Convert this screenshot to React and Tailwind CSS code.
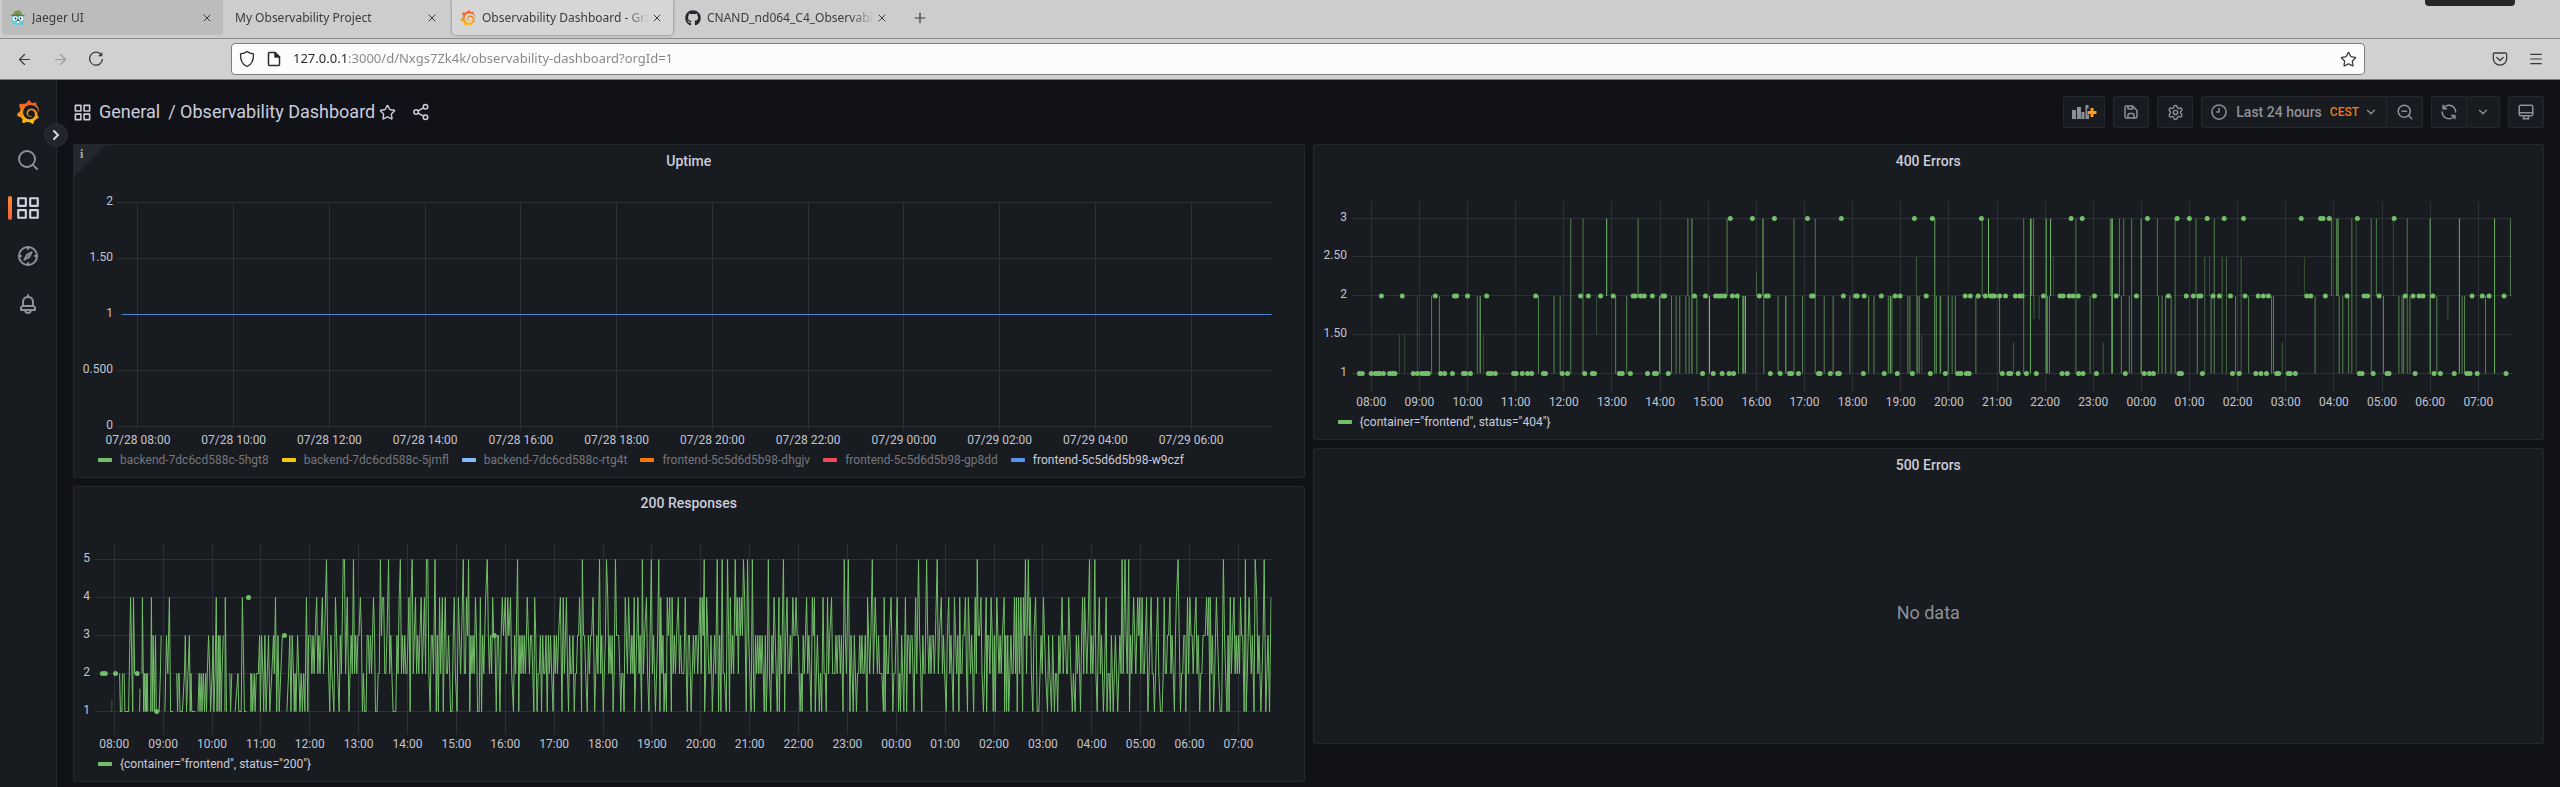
import React from "react";
import { ArrowLeft, ArrowRight, ChevronDown, Menu, Plus, Search, Settings, Star, X, ZoomOut } from "lucide-react";
import { SiGrafana } from "react-icons/si";
import { FaGithub } from "react-icons/fa";

const GREEN = "#73bf69";

/* ---------- icons ---------- */

function AppsIcon({ size }) {
  return (
    <svg width={size} height={size} viewBox="0 0 24 24" fill="none" stroke="currentColor" strokeWidth="2" strokeLinejoin="round">
      <rect x="3" y="3" width="7" height="7" />
      <rect x="14" y="3" width="7" height="7" />
      <rect x="3" y="14" width="7" height="7" />
      <rect x="14" y="14" width="7" height="7" />
    </svg>
  );
}

function CompassIcon() {
  return (
    <svg width="24" height="24" viewBox="0 0 24 24" fill="none" stroke="currentColor" strokeWidth="2" strokeLinecap="round" strokeLinejoin="round">
      <circle cx="12" cy="12" r="9" />
      <path d="M12 3v2M12 19v2M3 12h2M19 12h2" />
      <path d="M15.8 8.2l-5 2.6-2.6 5 5-2.6z" strokeWidth="1.7" />
      <circle cx="12" cy="12" r="0.4" strokeWidth="1" />
    </svg>
  );
}

function BellIcon() {
  return (
    <svg width="24" height="24" viewBox="0 0 24 24" fill="currentColor">
      <path d="M18,13.18V10a6,6,0,0,0-5-5.91V3a1,1,0,0,0-2,0V4.09A6,6,0,0,0,6,10v3.18A3,3,0,0,0,4,16v2a1,1,0,0,0,1,1H8.14a4,4,0,0,0,7.72,0H19a1,1,0,0,0,1-1V16A3,3,0,0,0,18,13.18ZM8,10a4,4,0,0,1,8,0v3H8Zm4,10a2,2,0,0,1-1.72-1h3.44A2,2,0,0,1,12,20Zm6-3H6V16a1,1,0,0,1,1-1H17a1,1,0,0,1,1,1Z" />
    </svg>
  );
}

function ShareIcon() {
  return (
    <svg width="18" height="18" viewBox="0 0 24 24" fill="none" stroke="currentColor" strokeWidth="2">
      <circle cx="18" cy="5" r="3" />
      <circle cx="18" cy="19" r="3" />
      <circle cx="5.5" cy="12" r="3" />
      <path d="M8.2 10.6l7.2-4M8.2 13.4l7.2 4" />
    </svg>
  );
}

function SaveIcon() {
  return (
    <svg width="18" height="18" viewBox="0 0 24 24" fill="currentColor">
      <path d="M20.71,9.29l-6-6a1,1,0,0,0-.32-.21A1.09,1.09,0,0,0,14,3H6A3,3,0,0,0,3,6V18a3,3,0,0,0,3,3H18a3,3,0,0,0,3-3V10A1,1,0,0,0,20.71,9.29ZM9,5h4V7H9Zm6,14H9V16a1,1,0,0,1,1-1h4a1,1,0,0,1,1,1Zm4-1a1,1,0,0,1-1,1H17V16a3,3,0,0,0-3-3H10a3,3,0,0,0-3,3v3H6a1,1,0,0,1-1-1V6A1,1,0,0,1,6,5H7V8A1,1,0,0,0,8,9h6a1,1,0,0,0,1-1V6.41l4,4Z" />
    </svg>
  );
}

function SyncIcon() {
  return (
    <svg width="18" height="18" viewBox="0 0 24 24" fill="currentColor">
      <path d="M19.91,15.51H15.38a1,1,0,0,0,0,2h2.4A8,8,0,0,1,4,12a1,1,0,1,0-2,0,10,10,0,0,0,16.88,7.23V21a1,1,0,0,0,2,0V16.5A1,1,0,0,0,19.91,15.51ZM12,2A10,10,0,0,0,5.12,4.77V3a1,1,0,0,0-2,0V7.5a1,1,0,0,0,1,1h4.5a1,1,0,0,0,0-2H6.22A8,8,0,0,1,20,12a1,1,0,0,0,2,0A10,10,0,0,0,12,2Z" />
    </svg>
  );
}

function ClockIcon() {
  return (
    <svg width="18" height="18" viewBox="0 0 24 24" fill="none" stroke="currentColor" strokeWidth="2" strokeLinecap="round" strokeLinejoin="round">
      <circle cx="12" cy="12" r="9.5" />
      <path d="M12 7v5H9" />
    </svg>
  );
}

function MonitorIcon() {
  return (
    <svg width="18" height="18" viewBox="0 0 24 24" fill="none" stroke="currentColor" strokeWidth="2" strokeLinejoin="round" strokeLinecap="round">
      <rect x="3" y="3" width="18" height="14" rx="2" />
      <path d="M3 13h18M9 17v4h6v-4M8 21h8" />
    </svg>
  );
}

function AddPanelIcon() {
  return (
    <svg width="25" height="16" viewBox="0 0 25 16">
      <path d="M0 6h4v9H0zM5 3h4v12H5zM9.500 8h3v7h-3zM13.500 1h3v3.500h-1.500v6h2V15h-3.500z" fill="#8e9099" />
      <path d="M18.500 4h3v3h3v3h-3v3h-3v-3h-3V7h3z" fill="#ff9b26" />
    </svg>
  );
}

function GopherIcon() {
  return (
    <svg width="16" height="18" viewBox="0 0 16 18">
      <path d="M2 7c0-3 12-3 12 0v9H2z" fill="#67cbdc" />
      <path d="M0.500 6.500C4 3.500 11 4 15.500 7 11 7 5 8 0.500 6.500z" fill="#66803f" />
      <path d="M3.500 4.500C4 1 6 2 7.500 1.500S11 1 12 5.500z" fill="#7c9554" />
      <circle cx="5" cy="9.500" r="2.300" fill="#fff" />
      <circle cx="11" cy="9.500" r="2.300" fill="#fff" />
      <circle cx="5.500" cy="9.500" r="0.900" fill="#222" />
      <circle cx="10.500" cy="9.500" r="0.900" fill="#222" />
      <ellipse cx="8" cy="11.500" rx="1.300" ry="0.900" fill="#3a3331" />
      <path d="M7 12h2v2H7z" fill="#fff" />
      <path d="M1 14l2 3M15 14l-1 3" stroke="#d9bd94" strokeWidth="1.500" />
    </svg>
  );
}

function ReloadIcon() {
  return (
    <svg width="16" height="16" viewBox="0 0 16 16" fill="none" stroke="currentColor" strokeWidth="1.300">
      <path d="M13.500 4.200A6.500 6.500 0 1 0 14.500 8" />
      <path d="M14.300 1v4.200H10z" fill="currentColor" stroke="none" />
    </svg>
  );
}

function ShieldIcon() {
  return (
    <svg width="16" height="18" viewBox="0 0 16 18" fill="none" stroke="#2b2b2b" strokeWidth="1.300" strokeLinejoin="round">
      <path d="M8 1.500c2 1.600 4 2.200 6.500 2.400C14.700 9.500 12.500 14.500 8 16.500 3.500 14.500 1.300 9.500 1.500 3.900 4 3.700 6 3.100 8 1.500z" />
    </svg>
  );
}

function PageIcon() {
  return (
    <svg width="14" height="16" viewBox="0 0 14 16" fill="none" stroke="#2b2b2b" strokeWidth="1.500" strokeLinejoin="round">
      <path d="M2.500 1.500H8l4.500 4.500v7.500a1 1 0 0 1-1 1h-9a1 1 0 0 1-1-1v-11a1 1 0 0 1 1-1z" />
      <path d="M8 1.500V6h4.500z" fill="#2b2b2b" />
    </svg>
  );
}

function PocketIcon() {
  return (
    <svg width="16" height="16" viewBox="0 0 16 16" fill="none" stroke="currentColor" strokeWidth="1.300" strokeLinecap="round" strokeLinejoin="round">
      <path d="M2.500 2h11a1.200 1.200 0 0 1 1.200 1.200V7.500a6.700 6.700 0 0 1-13.400 0V3.200A1.200 1.200 0 0 1 2.500 2z" />
      <path d="M4.800 6.500L8 9.500l3.200-3" />
    </svg>
  );
}

/* ---------- browser ---------- */

function Tab({ icon, label, variant = "" }) {
  return (
    <div className={`flex h-[35px] w-[221px] shrink-0 items-center rounded-b-[4px] pr-2 pl-2 ${variant}`}>
      {icon && <span className="mr-[6px] flex w-4 shrink-0 justify-center">{icon}</span>}
      <button
        type="button"
        role="tab"
        className="min-w-0 flex-1 text-left text-[12px] leading-[18px] whitespace-nowrap [mask-image:linear-gradient(to_left,transparent,black_24px)]"
      >
        {label}
      </button>
      <button type="button" aria-label={`Close ${label}`} className="flex w-4 shrink-0 justify-center">
        <X size={12} strokeWidth={2} />
      </button>
    </div>
  );
}

function Browser() {
  return (
    <header className="bg-[#cdcdcd] font-['Noto_Sans',sans-serif] text-[#3b3b3b]">
      <div role="tablist" className="relative flex h-[39px] items-start gap-1 border-b border-[#8c8c8c] pl-[2px]">
        <Tab icon={<GopherIcon />} label="Jaeger UI" variant="bg-[#bcbcbc]" />
        <Tab label="My Observability Project" />
        <Tab icon={<SiGrafana size={16} fill="url(#flame)" stroke="none" />} label="Observability Dashboard - Gra" variant="bg-[#d6d6d6] shadow-[0_0_3px_rgba(0,0,0,0.45)]" />
        <Tab icon={<FaGithub size={16} color="#24292f" className="shrink-0" />} label="CNAND_nd064_C4_Observabil" />
        <button type="button" aria-label="New tab" className="flex h-[35px] w-9 items-center justify-center">
          <Plus size={16} strokeWidth={1.8} />
        </button>
        <div className="absolute top-0 right-[45px] h-[6px] w-[90px] rounded-b-[4px] bg-[#272727]" />
      </div>
      <div className="flex h-[41px] items-center border-b border-[#7d7d7d] bg-[#d1d1d1]">
        <nav className="flex w-[231px] shrink-0 items-center gap-[19px] pl-4">
          <button type="button" aria-label="Back"><ArrowLeft size={17} strokeWidth={1.7} /></button>
          <button type="button" aria-label="Forward" className="text-[#9b9b9b]"><ArrowRight size={17} strokeWidth={1.7} /></button>
          <button type="button" aria-label="Reload"><ReloadIcon /></button>
        </nav>
        <div className="flex h-8 min-w-0 flex-1 items-center rounded-[4px] border border-[#7f7f7f] bg-[#fcfcfc] px-[7px]">
          <ShieldIcon />
          <span className="ml-3"><PageIcon /></span>
          <input
            aria-label="Address"
            defaultValue="127.0.0.1:3000/d/Nxgs7Zk4k/observability-dashboard?orgId=1"
            className="ml-3 min-w-0 flex-1 bg-[linear-gradient(to_right,#222_55px,#858585_55px)] bg-clip-text text-[13px] text-transparent outline-none"
          />
          <button type="button" aria-label="Bookmark this page"><Star size={17} strokeWidth={1.8} /></button>
        </div>
        <div className="flex w-[195px] shrink-0 items-center justify-end gap-5 pr-4">
          <button type="button" aria-label="Save to Pocket"><PocketIcon /></button>
          <button type="button" aria-label="Menu"><Menu size={16} strokeWidth={1.8} /></button>
        </div>
      </div>
    </header>
  );
}

/* ---------- sidebar and toolbar ---------- */

function Sidebar() {
  return (
    <aside className="relative flex w-[57px] shrink-0 flex-col items-center border-r border-[#24272c] bg-[#181b1f] pt-2 text-[#8f919b]">
      <a href="#home" aria-label="Home" className="flex h-12 items-center">
        <SiGrafana size={24} fill="url(#flame)" stroke="none" />
      </a>
      <button type="button" aria-label="Expand menu" className="absolute top-[43px] -right-3 flex h-6 w-6 items-center justify-center rounded-full border border-[#2c2f35] bg-[#22252b] text-[#d5d6e0]">
        <svg width="8" height="12" viewBox="0 0 8 12" fill="none" stroke="currentColor" strokeWidth="2" strokeLinecap="round">
          <path d="M2 2l4 4-4 4" />
        </svg>
      </button>
      <a href="#search" aria-label="Search" className="flex h-12 items-center"><Search size={24} strokeWidth={1.9} /></a>
      <a href="#dashboards" aria-label="Dashboards" className="relative flex h-12 items-center text-[#d0d1dd]">
        <AppsIcon size={26} />
        <span className="absolute top-3 right-[29px] h-6 w-1 rounded-[2px] bg-gradient-to-b from-[#ff8833] to-[#f55f3e]" />
      </a>
      <a href="#explore" aria-label="Explore" className="flex h-12 items-center"><CompassIcon /></a>
      <a href="#alerting" aria-label="Alerting" className="flex h-12 items-center"><BellIcon /></a>
    </aside>
  );
}

function ToolButton({ label, className = "w-9", children }) {
  return (
    <button type="button" aria-label={label} className={`flex h-8 items-center justify-center rounded-[2px] border border-[#25282d] bg-[#181b1f] ${className}`}>
      {children}
    </button>
  );
}

function Toolbar() {
  return (
    <div className="flex h-16 items-center justify-between text-[#8e9099]">
      <div className="flex items-center text-[18px] leading-6 text-[#ccccdc]">
        <AppsIcon size={19} />
        <h1 className="ml-[7px] flex">
          <a href="#general">General</a>
          <a href="#dashboard" className="ml-2">/ Observability Dashboard</a>
        </h1>
        <button type="button" aria-label="Mark as favorite" className="ml-1"><Star size={17} strokeWidth={2} /></button>
        <button type="button" aria-label="Share dashboard" className="ml-4"><ShareIcon /></button>
      </div>
      <div className="flex gap-2">
        <ToolButton label="Add panel" className="w-[42px]"><AddPanelIcon /></ToolButton>
        <ToolButton label="Save dashboard"><SaveIcon /></ToolButton>
        <ToolButton label="Dashboard settings"><Settings size={17} strokeWidth={2} /></ToolButton>
        <div className="flex">
          <button type="button" className="flex h-8 items-center rounded-l-[2px] border border-[#25282d] bg-[#181b1f] px-2 text-[14px] font-medium">
            <ClockIcon />
            <span className="ml-2">Last 24 hours</span>
            <span className="ml-2 text-[12px] text-[#f27a12]">CEST</span>
            <ChevronDown size={14} strokeWidth={2.4} className="ml-[5px]" />
          </button>
          <ToolButton label="Zoom out time range" className="w-9 border-l-0"><ZoomOut size={18} strokeWidth={2} /></ToolButton>
        </div>
        <div className="flex">
          <ToolButton label="Refresh dashboard"><SyncIcon /></ToolButton>
          <ToolButton label="Refresh interval" className="w-[33px] border-l-0"><ChevronDown size={14} strokeWidth={2.4} /></ToolButton>
        </div>
        <ToolButton label="Cycle view mode"><MonitorIcon /></ToolButton>
      </div>
    </div>
  );
}

/* ---------- panels ---------- */

function Panel({ title, info, className = "", children }) {
  return (
    <section className={`relative flex flex-col rounded-[2px] border border-[#24272b] bg-[#181b1f] ${className}`}>
      {info && (
        <button type="button" aria-label="Panel description" className="absolute top-0 left-0 flex h-8 w-8 items-start bg-[#24282e] pt-[3px] pl-[6px] text-left [clip-path:polygon(0_0,100%_0,0_100%)]">
          <span className="block font-['Liberation_Serif',serif] text-[12px] leading-[12px] font-bold text-[#a9abb5]">i</span>
        </button>
      )}
      <h2 className="h-8 text-center text-[14px] leading-8 font-medium text-[#ccccdc]">{title}</h2>
      {children}
    </section>
  );
}

function Legend({ items }) {
  return (
    <ul className="mx-2 mb-2 flex h-[18px] items-center gap-[13px] pl-4 text-[12px] leading-[18px]">
      {items.map(({ label, color, dim }) => (
        <li key={label} className="flex items-center gap-2 whitespace-nowrap">
          <span className="h-1 w-[14px] rounded-[1px]" style={{ background: color }} />
          <button type="button" className={dim ? "text-[#74767e]" : "text-[#ccccdc]"}>{label}</button>
        </li>
      ))}
    </ul>
  );
}

/* Axes and grid; horizontal positions are percentages of the plot width. */
function Plot({ name, height, yTicks, xTicks, top, bottom, domain, pad, children }) {
  const pct = (v) => `${(v / domain) * 100}%`;
  return (
    <div className={`mx-2 pr-6 ${pad}`}>
      <svg role="img" aria-label={name} width="100%" height={height} className="block overflow-visible text-[12px]">
        <g stroke="#2d3035" shapeRendering="crispEdges">
          {yTicks.map(([label, y]) => (
            <React.Fragment key={label}>
              <line x1="0" x2="100%" y1={y} y2={y} />
              <line x1="-4" x2="0" y1={y} y2={y} />
            </React.Fragment>
          ))}
          {xTicks.map(([label, x]) => (
            <line key={label} x1={pct(x)} x2={pct(x)} y1={top} y2={bottom} />
          ))}
        </g>
        <g fill="#c3c4d2">
          {yTicks.map(([label, y]) => (
            <text key={label} x="-9" y={y + 2} textAnchor="end">{label}</text>
          ))}
          {xTicks.map(([label, x]) => (
            <text key={label} x={pct(x)} y={height - 7} textAnchor="middle">{label}</text>
          ))}
        </g>
        {children}
      </svg>
    </div>
  );
}

function hourTicks(first, step) {
  return Array.from({ length: 24 }, (_, i) => [`${String((8 + i) % 24).padStart(2, "0")}:00`, first + i * step]);
}

/* ---------- uptime ---------- */

const UPTIME_X = Array.from({ length: 12 }, (_, i) => {
  const hour = 8 + i * 2;
  return [`07/${hour < 24 ? 28 : 29} ${String(hour % 24).padStart(2, "0")}:00`, 16 + i * 95.75];
});

const UPTIME_LEGEND = [
  { label: "backend-7dc6cd588c-5hgt8", color: "#73bf69", dim: true },
  { label: "backend-7dc6cd588c-5jmfl", color: "#f2cc0c", dim: true },
  { label: "backend-7dc6cd588c-rtg4t", color: "#8ab8ff", dim: true },
  { label: "frontend-5c5d6d5b98-dhgjv", color: "#ff780a", dim: true },
  { label: "frontend-5c5d6d5b98-gp8dd", color: "#f2495c", dim: true },
  { label: "frontend-5c5d6d5b98-w9czf", color: "#5794f2" },
];

/* ---------- 200 responses ---------- */

const OK_WIDTH = 1172.6;
const okA = (c) => c / 2.45 - 39;
const okB = (c) => c / 2.45 + 591;
const okY = (level) => 230.5 - level * 38;

/* Runs of [time, requests]; a run ends where samples are missing. */
const OK_EARLY = [
  [[146, 2], [148, 1], [152, 1], [153, 2]],
  [[157, 2], [159, 1], [168, 1], [173, 4], [178, 1], [180, 4], [183, 2], [189, 2]],
  [[195, 1], [196, 1.6]],
  [[201, 2], [202, 4], [205, 1], [207, 2], [209, 1], [211, 2], [212, 1], [214, 2], [215, 1]],
  [[222, 1], [224, 4], [226, 1], [228, 3], [231, 1], [234, 3], [236, 1], [243, 1], [246, 2], [248, 3]],
  [[257, 1], [261, 3], [264, 2], [268, 4], [271, 1], [277, 1]],
  [[286, 2], [288, 1], [290, 2], [292, 2], [294, 1], [300, 1], [305, 2], [307, 3], [310, 1], [317, 3], [319, 1], [321, 2], [323, 1], [331, 1]],
  [[338, 1], [341, 2], [343, 1], [346, 2], [348, 1], [351, 2], [354, 1], [357, 2], [359, 1], [361, 2], [364, 3], [367, 2], [369, 1], [373, 2], [375, 3], [377, 1], [380, 2], [383, 4], [385, 1], [388, 3], [390, 1], [392, 3], [395, 1], [397, 2], [400, 3]],
  [[404, 1], [405, 4], [408, 1]],
  [[416, 2], [418, 1], [421, 2]],
  [[429, 1], [436, 2], [438, 1], [444, 1], [447, 4], [452, 1], [457, 1]],
  [[467, 2], [468, 1], [470, 2], [472, 1], [476, 2], [478, 1], [481, 2], [486, 2], [489, 3], [491, 1], [494, 3], [497, 2], [499, 1], [502, 3], [505, 1], [508, 2], [511, 3], [514, 1], [519, 2], [523, 3], [525, 2], [528, 4], [531, 1], [534, 3], [537, 1], [541, 2], [545, 3], [550, 3]],
  [[556, 1], [560, 2], [563, 3], [566, 1], [569, 3], [572, 2], [574, 1], [576, 2], [578, 1], [582, 3], [585, 2], [588, 1], [591, 2], [594, 1], [597, 2], [600, 1], [604, 4], [607, 1], [609, 3]],
].map((run) => run.map(([c, v]) => [okA(c), v]));

const OK_DOTS = [[104, 2], [111, 2], [136, 2], [189, 2], [237, 1], [462, 4], [550, 3], [1064, 3]].map(([c, v]) => [okA(c), v]);

const FIVE_A = [653, 694, 697, 719, 785, 805, 834, 863, 898, 901, 919, 988, 1001, 1047, 1121, 1280, 1322, 1339, 1361, 1427, 1449, 1467];
const FIVE_B = [35, 67, 79, 92, 111, 131, 141, 153, 192, 229, 378, 388, 447, 560, 580, 606, 704, 822, 829, 979, 992, 1059, 1066, 1075, 1196, 1307, 1361, 1385, 1407];
const FOUR_A = [629, 643, 675, 704, 736, 768, 790, 793, 831, 855, 860, 871, 885, 893, 930, 937, 944, 966, 976, 996, 1018, 1030, 1043, 1060, 1084, 1091, 1097, 1104, 1145, 1163, 1226, 1233, 1241, 1273, 1306, 1342, 1385, 1393, 1407, 1416, 1437, 1472, 1488, 1494, 1500, 1515, 1532];
const FOUR_B = [25, 30, 41, 99, 116, 121, 126, 134, 206, 218, 238, 252, 260, 286, 300, 305, 326, 337, 347, 435, 454, 476, 493, 508, 528, 553, 616, 634, 648, 661, 675, 682, 699, 713, 726, 738, 752, 770, 795, 800, 805, 811, 817, 834, 847, 866, 912, 928, 962, 967, 1003, 1020, 1087, 1097, 1102, 1108, 1119, 1130, 1146, 1162, 1176, 1192, 1219, 1225, 1240, 1266, 1271, 1275, 1290, 1324, 1333, 1349, 1370, 1389, 1424];
const ONE_A = [661, 671, 684, 708, 741, 746, 750, 773, 777, 816, 819, 823, 858, 907, 922, 927, 939, 957, 961, 973, 1004, 1023, 1027, 1033, 1069, 1078, 1111, 1124, 1161, 1169, 1180, 1194, 1208, 1230, 1246, 1260, 1278, 1292, 1310, 1331, 1355, 1374, 1382, 1408, 1425, 1443, 1459, 1470, 1480, 1486, 1498, 1537];
const ONE_B = [3, 36, 55, 70, 76, 89, 97, 138, 150, 158, 182, 187, 198, 214, 219, 232, 270, 275, 297, 307, 317, 323, 334, 375, 392, 400, 408, 434, 474, 478, 497, 511, 516, 524, 531, 549, 568, 628, 645, 659, 680, 695, 719, 727, 743, 748, 771, 776, 781, 802, 815, 840, 851, 855, 876, 886, 893, 901, 937, 944, 957, 998, 1013, 1022, 1030, 1037, 1048, 1077, 1122, 1138, 1153, 1157, 1187, 1202, 1215, 1249, 1274, 1283, 1299, 1303, 1316, 1321, 1358, 1363, 1382, 1399, 1411, 1420];

const OK_LATE = (() => {
  const marks = [
    ...FIVE_A.map((c) => [okA(c), 5]), ...FIVE_B.map((c) => [okB(c), 5]),
    ...FOUR_A.map((c) => [okA(c), 4]), ...FOUR_B.map((c) => [okB(c), 4]),
    ...ONE_A.map((c) => [okA(c), 1]), ...ONE_B.map((c) => [okB(c), 1]),
  ].sort((a, b) => a[0] - b[0]);
  const points = [[okA(609), 3]];
  let seed = 7;
  const random = () => {
    seed = (seed * 16807) % 2147483647;
    return seed / 2147483647;
  };
  let level = 2;
  for (const mark of marks) {
    let x = points[points.length - 1][0] + 1.1;
    while (x < mark[0] - 0.8) {
      level = random() < 0.8 ? 5 - level : level;
      points.push([x, level]);
      x += 1.1;
    }
    points.push(mark);
  }
  return points;
})();

function OkSeries() {
  return (
    <>
      <svg width="100%" height="236" viewBox={`0 0 ${OK_WIDTH} 236`} preserveAspectRatio="none" fill="none" stroke={GREEN} strokeLinejoin="bevel">
        {[...OK_EARLY, OK_LATE].map((run, i) => (
          <polyline key={i} points={run.map(([x, v]) => `${x.toFixed(1)},${okY(v)}`).join(" ")} />
        ))}
        <path d={`M${okA(127)} 192.5v-12`} opacity="0.4" />
      </svg>
      {OK_DOTS.map(([x, v]) => (
        <circle key={x} cx={`${(x / OK_WIDTH) * 100}%`} cy={okY(v)} r="2.5" fill={GREEN} />
      ))}
    </>
  );
}

/* ---------- 400 errors ---------- */

const ERR_WIDTH = 1155.7;
const errA = (c) => c / 2.45 - 46;
const errB = (c) => c / 2.529 + 584;
const errY = (level) => 274 - level * 77.5;

const ERR_DOTS = [
  [3, errA, [1030, 1084, 1138, 1219, 1302, 1481, 1525]],
  [2, errA, [175, 226, 307, 354, 359, 386, 433, 553, 663, 682, 712, 743, 792, 797, 810, 819, 839, 865, 869, 942, 969, 994, 1001, 1008, 1016, 1035, 1047, 1101, 1118, 1123, 1229, 1233, 1307, 1337, 1341, 1358, 1400, 1434, 1446, 1510]],
  [1, errA, [121, 128, 150, 160, 166, 171, 180, 195, 202, 208, 253, 263, 274, 280, 285, 290, 320, 330, 349, 376, 381, 393, 437, 444, 454, 499, 505, 520, 533, 543, 572, 577, 618, 631, 673, 692, 697, 758, 765, 785, 827, 844, 849, 878, 962, 988, 1010, 1027, 1038, 1128, 1152, 1175, 1180, 1197, 1246, 1250, 1275, 1293, 1297, 1356, 1407, 1439, 1476, 1520, 1557]],
  [3, errB, [105, 332, 360, 525, 600, 631, 676, 719, 768, 914, 963, 969, 985, 1056, 1149]],
  [2, errB, [64, 77, 97, 115, 128, 133, 138, 151, 166, 191, 202, 208, 262, 304, 312, 327, 337, 350, 391, 446, 497, 578, 623, 641, 655, 660, 691, 707, 735, 772, 805, 818, 831, 928, 938, 975, 1030, 1073, 1082, 1111, 1177, 1197, 1212, 1222, 1247, 1346, 1372, 1389, 1427]],
  [1, errB, [45, 53, 67, 74, 158, 174, 179, 198, 219, 244, 309, 322, 351, 362, 396, 469, 517, 530, 540, 605, 611, 664, 740, 757, 799, 812, 826, 852, 857, 881, 886, 899, 1061, 1068, 1096, 1131, 1136, 1202, 1250, 1266, 1301, 1333, 1341, 1359, 1432]],
].flatMap(([level, at, list]) => list.map((c) => [at(c), level]));

/* [low, high, opacity, scale, positions] */
const ERR_LINES = [
  [1, 2, 0.65, errA, [298, 317, 410, 560, 598, 613, 749, 776, 886, 897, 906, 921, 929, 948, 1050, 1060, 1112, 1147, 1207, 1260, 1282, 1323, 1369, 1382, 1417, 1426, 1465, 1470, 1489, 1493, 1535, 1544]],
  [1, 2, 1, errA, [417, 857, 979, 1063, 1067, 1166, 1422]],
  [1, 3, 0.6, errA, [639, 669, 1186, 1238]],
  [1, 3, 0.85, errA, [936, 1531]],
  [2, 3, 0.65, errA, [804, 926, 1022]],
  [2, 3, 1, errA, [727, 1110]],
  [1, 2.5, 0.4, errA, [1486]],
  [1, 2, 0.3, errA, [263]],
  [1, 1.5, 0.3, errA, [219, 232, 425, 1499]],
  [1.5, 2, 0.3, errA, [702]],
  [2, 2.3, 0.4, errA, [1094]],
  [1, 2, 0.65, errB, [2, 21, 31, 39, 91, 151, 272, 277, 380, 459, 479, 553, 562, 571, 585, 651, 686, 748, 781, 839, 844, 949, 1010, 1019, 1034, 1122, 1161, 1169, 1173, 1189, 1257, 1321, 1327, 1380]],
  [1, 3, 0.6, errB, [212, 344, 485, 595, 694, 1042, 1091, 1182]],
  [1, 3, 0.9, errB, [229, 269, 435, 436, 509, 1240, 1314, 1403]],
  [2, 3, 0.6, errB, [107, 232, 237, 431, 454, 465, 550, 648, 991, 1003, 1104, 1443]],
  [2, 3, 1, errB, [123, 280, 1007]],
  [1, 2.5, 0.45, errB, [670, 714, 725, 762]],
  [2, 2.5, 0.3, errB, [287, 682, 922]],
  [1, 3, 0.3, errB, [1053]],
  [2, 3, 0.3, errB, [1147]],
  [1, 1.4, 0.4, errB, [186, 413, 866]],
  [1.7, 2, 0.4, errB, [238, 251, 1285]],
].flatMap(([low, high, opacity, at, list]) => list.map((c) => [at(c), low, high, opacity]));

function ErrSeries() {
  const pct = (x) => `${(x / ERR_WIDTH) * 100}%`;
  return (
    <>
      <g stroke={GREEN}>
        {ERR_LINES.map(([x, low, high, opacity], i) => (
          <line key={i} x1={pct(x)} x2={pct(x)} y1={errY(low)} y2={errY(high)} opacity={opacity} />
        ))}
      </g>
      <g fill={GREEN}>
        {ERR_DOTS.map(([x, level], i) => (
          <circle key={i} cx={pct(x)} cy={errY(level)} r="2.5" />
        ))}
      </g>
    </>
  );
}

/* ---------- page ---------- */

export default function App() {
  return (
    <div className="flex min-h-screen flex-col bg-[#111217] font-[Roboto,sans-serif]">
      <svg width="0" height="0" className="absolute">
        <defs>
          <linearGradient id="flame" x1="0" y1="0" x2="0" y2="1">
            <stop offset="0.1" stopColor="#f05a28" />
            <stop offset="1" stopColor="#fbca0a" />
          </linearGradient>
        </defs>
      </svg>
      <Browser />
      <div className="flex flex-1">
        <Sidebar />
        <main className="min-w-0 flex-1 px-4">
          <Toolbar />
          <div className="grid grid-cols-2 items-start gap-2">
            <div className="flex flex-col gap-2">
              <Panel title="Uptime" info>
                <Plot
                  name="Uptime"
                  height={274}
                  top={25}
                  bottom={253}
                  domain={1149.6}
                  pad="pl-10"
                  xTicks={UPTIME_X}
                  yTicks={[["2", 25.5], ["1.50", 81.5], ["1", 137.5], ["0.500", 193.5], ["0", 249.5]]}
                >
                  <line x1="0" x2="100%" y1="137.5" y2="137.5" stroke="#5794f2" strokeOpacity="0.85" />
                </Plot>
                <Legend items={UPTIME_LEGEND} />
              </Panel>
              <Panel title="200 Responses">
                <Plot
                  name="200 Responses"
                  height={236}
                  top={25}
                  bottom={215}
                  domain={OK_WIDTH}
                  pad="pl-[17px]"
                  xTicks={hourTicks(15.3, 48.88)}
                  yTicks={[["5", 40.5], ["4", 78.5], ["3", 116.5], ["2", 154.5], ["1", 192.5]]}
                >
                  <OkSeries />
                </Plot>
                <Legend items={[{ label: '{container="frontend", status="200"}', color: GREEN }]} />
              </Panel>
            </div>
            <div className="flex flex-col gap-2">
              <Panel title="400 Errors">
                <Plot
                  name="400 Errors"
                  height={236}
                  top={25}
                  bottom={215}
                  domain={ERR_WIDTH}
                  pad="pl-[34px]"
                  xTicks={hourTicks(15.3, 48.14)}
                  yTicks={[["3", 41.5], ["2.50", 79.5], ["2", 118.5], ["1.50", 157.5], ["1", 196.5]]}
                >
                  <ErrSeries />
                </Plot>
                <Legend items={[{ label: '{container="frontend", status="404"}', color: GREEN }]} />
              </Panel>
              <Panel title="500 Errors">
                <p className="flex h-[262px] items-center justify-center text-[18px] text-[#8e9099]">No data</p>
              </Panel>
            </div>
          </div>
        </main>
      </div>
    </div>
  );
}
